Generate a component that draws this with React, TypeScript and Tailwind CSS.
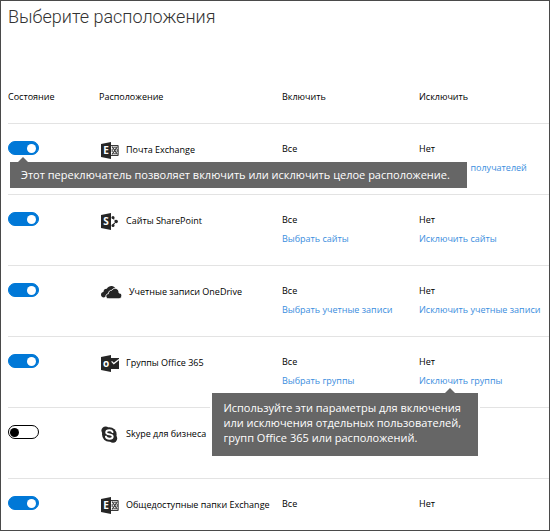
import React from 'react';

function OfficeDoor({ letter }: { letter: string }) {
  return (
    <>
      <path d="M0 2 L10 0 V17 L0 15 Z" fill="#262626" />
      <text x="5" y="12" textAnchor="middle" className="fill-white font-['Open_Sans',sans-serif] text-[10px] font-bold">
        {letter}
      </text>
    </>
  );
}

function ExchangeIcon() {
  return (
    <svg className="shrink-0" width="18" height="17" viewBox="0 0 18 17" aria-hidden="true">
      <path d="M10 3.5 H17.2 V13.5 H10" fill="none" stroke="#3a3a3a" strokeWidth="1" />
      <path d="M11 4.5 L16.5 12.5 M16.5 4.5 L11 12.5" stroke="#3a3a3a" strokeWidth="1.3" />
      <path d="M12.3 5.2 h3 M12.3 11.8 h3 M11.2 7 v3 M16.2 7 v3" stroke="#3a3a3a" strokeWidth="1" />
      <OfficeDoor letter="E" />
    </svg>
  );
}

function SharePointIcon() {
  return (
    <svg className="shrink-0" width="18" height="17" viewBox="0 0 18 17" aria-hidden="true">
      <path d="M11.5 4.5 L15 8.5 L11.5 12.5" fill="none" stroke="#262626" strokeWidth="1.2" strokeDasharray="2.6 1" />
      <circle cx="12" cy="4.4" r="1.5" fill="#262626" />
      <circle cx="15.2" cy="8.5" r="1.7" fill="#262626" />
      <circle cx="12" cy="12.6" r="1.5" fill="#262626" />
      <OfficeDoor letter="S" />
    </svg>
  );
}

function OneDriveIcon() {
  return (
    <svg className="shrink-0" width="21" height="17" viewBox="0 0 21 17" aria-hidden="true">
      <path
        d="M3 13.5 C0.8 13.5 0 12 0 10.8 C0 9.2 1.2 8.2 2.4 8.1 C2.5 5.8 4 4.6 5.8 4.8 C7 2.5 9 1.8 11 2 C13 2.3 14.6 3.6 15.2 5.6 L12 8 Z"
        fill="#262626"
      />
      <path
        d="M8 14.8 C5.8 14.8 4.9 13.6 4.9 12.2 C4.9 10.7 6 9.8 7.4 9.7 C7.4 7.4 9 6.2 10.8 6.3 C12 4.4 13.6 4 15 4.4 C17 4.9 18 6.6 18 8.9 C20 9 20.8 10.3 20.8 11.8 C20.8 13.6 19.6 14.8 18 14.8 Z"
        fill="#262626"
        stroke="#ffffff"
        strokeWidth="0.9"
      />
    </svg>
  );
}

function OutlookIcon() {
  return (
    <svg className="shrink-0" width="18" height="17" viewBox="0 0 18 17" aria-hidden="true">
      <path d="M10 3 H18 V14 H10 Z" fill="#262626" />
      <path d="M10.6 6.4 L12.8 8.6 L18 4.6" fill="none" stroke="#ffffff" strokeWidth="1.2" />
      <OfficeDoor letter="o" />
    </svg>
  );
}

function SkypeIcon() {
  return (
    <svg className="shrink-0" width="18" height="17" viewBox="0 0 18 17" aria-hidden="true">
      <circle cx="8.3" cy="8.5" r="7.3" fill="#262626" />
      <circle cx="4.6" cy="4.6" r="4.2" fill="#262626" />
      <circle cx="12" cy="12.5" r="4.2" fill="#262626" />
      <path
        d="M11.6 6.1 C11.1 4.7 9.8 4.3 8.3 4.3 C6.6 4.3 5.2 5.1 5.2 6.4 C5.2 9.2 11.7 7.6 11.7 10.4 C11.7 11.8 10.3 12.7 8.4 12.7 C6.7 12.7 5.4 12.1 4.9 10.6"
        fill="none"
        stroke="#ffffff"
        strokeWidth="1.9"
        strokeLinecap="round"
      />
    </svg>
  );
}

function Callout({ className, arrowClassName, children }: { className: string; arrowClassName: string; children: React.ReactNode }) {
  return (
    <div
      role="tooltip"
      className={`absolute z-10 bg-[#666666] pr-[17px] pl-[11px] text-left text-[11px] leading-[15px] whitespace-nowrap text-white ring-2 ring-white ${className}`}
    >
      <span className={`absolute bottom-full h-0 w-0 border-x-[5px] border-b-[5px] border-x-transparent border-b-[#666666] ${arrowClassName}`} />
      {children}
    </div>
  );
}

type Row = {
  id: string;
  name: string;
  icon: React.ReactNode;
  on: boolean;
  include?: string;
  exclude?: string;
  includeLink?: string;
  excludeLink?: string;
  toggleTip?: React.ReactNode;
  excludeTip?: React.ReactNode;
};

const rows: Row[] = [
  {
    id: 'exchange',
    name: 'Почта Exchange',
    icon: <ExchangeIcon />,
    on: true,
    include: 'Все',
    exclude: 'Нет',
    excludeLink: 'Исключить получателей',
    toggleTip: (
      <Callout className="top-[21px] left-[2px] pt-[5px] pb-[6px]" arrowClassName="left-[8px]">
        Этот переключатель позволяет включить или исключить целое расположение.
      </Callout>
    ),
  },
  {
    id: 'sharepoint',
    name: 'Сайты SharePoint',
    icon: <SharePointIcon />,
    on: true,
    include: 'Все',
    exclude: 'Нет',
    includeLink: 'Выбрать сайты',
    excludeLink: 'Исключить сайты',
  },
  {
    id: 'onedrive',
    name: 'Учетные записи OneDrive',
    icon: <OneDriveIcon />,
    on: true,
    include: 'Все',
    exclude: 'Нет',
    includeLink: 'Выбрать учетные записи',
    excludeLink: 'Исключить учетные записи',
  },
  {
    id: 'groups',
    name: 'Группы Office 365',
    icon: <OutlookIcon />,
    on: true,
    include: 'Все',
    exclude: 'Нет',
    includeLink: 'Выбрать группы',
    excludeLink: 'Исключить группы',
    excludeTip: (
      <Callout className="top-[3px] right-[-59px] pt-[7px] pb-[11px]" arrowClassName="right-[23px]">
        Используйте эти параметры для включения
        <br />
        или исключения отдельных пользователей,
        <br />
        групп Office 365 или расположений.
      </Callout>
    ),
  },
  { id: 'skype', name: 'Skype для бизнеса', icon: <SkypeIcon />, on: false },
  {
    id: 'folders',
    name: 'Общедоступные папки Exchange',
    icon: <ExchangeIcon />,
    on: true,
    include: 'Все',
    exclude: 'Нет',
  },
];

function Scope({ value, link }: { value?: string; link?: string }) {
  return (
    <>
      <div>{value}</div>
      {link && (
        <a href="#" className="block leading-[18px] text-[#3b8ede]">
          {link}
        </a>
      )}
    </>
  );
}

export default function App() {
  return (
    <main className="min-h-screen overflow-hidden border border-[#4a4a4a] bg-white pl-[7px] font-['Open_Sans','Noto_Sans',sans-serif] text-[9px] leading-5 text-black">
      <h1 className="font-['Roboto','Open_Sans',sans-serif] text-[18px] leading-8 font-light text-[#333333]">Выберите расположения</h1>
      <table className="mt-[54px] w-full table-fixed border-collapse text-left">
        <thead>
          <tr className="border-b border-[#e3e3e3]">
            <th className="w-[91px] pb-[16px] font-normal">Состояние</th>
            <th className="w-[183px] pb-[16px] font-normal">Расположение</th>
            <th className="w-[137px] pb-[16px] font-normal">Включить</th>
            <th className="pb-[16px] font-normal">Исключить</th>
          </tr>
        </thead>
        <tbody>
          {rows.map((row) => (
            <tr key={row.id} className="h-[71px] border-b border-[#e3e3e3] align-top last:h-auto last:border-b-0">
              <td className="pt-[17px]">
                <div className="relative flex">
                  <input
                    id={row.id}
                    type="checkbox"
                    role="switch"
                    defaultChecked={row.on}
                    className="flex h-[14px] w-[31px] appearance-none items-center rounded-full border border-black bg-white px-px before:h-[9px] before:w-[9px] before:rounded-full before:bg-black checked:justify-end checked:border-[#0078d7] checked:bg-[#0078d7] checked:px-[2px] checked:before:bg-white"
                  />
                  {row.toggleTip}
                </div>
              </td>
              <td className="pt-[16px]">
                <label htmlFor={row.id} className="flex items-center gap-[7px] pl-[2px] whitespace-nowrap">
                  {row.icon}
                  {row.name}
                </label>
              </td>
              <td className="pt-[15px] pb-[14px]">
                <Scope value={row.include} link={row.includeLink} />
              </td>
              <td className="pt-[15px] pb-[14px] whitespace-nowrap">
                <Scope value={row.exclude} link={row.excludeLink} />
                {row.excludeTip && <div className="relative w-0">{row.excludeTip}</div>}
              </td>
            </tr>
          ))}
        </tbody>
      </table>
    </main>
  );
}
